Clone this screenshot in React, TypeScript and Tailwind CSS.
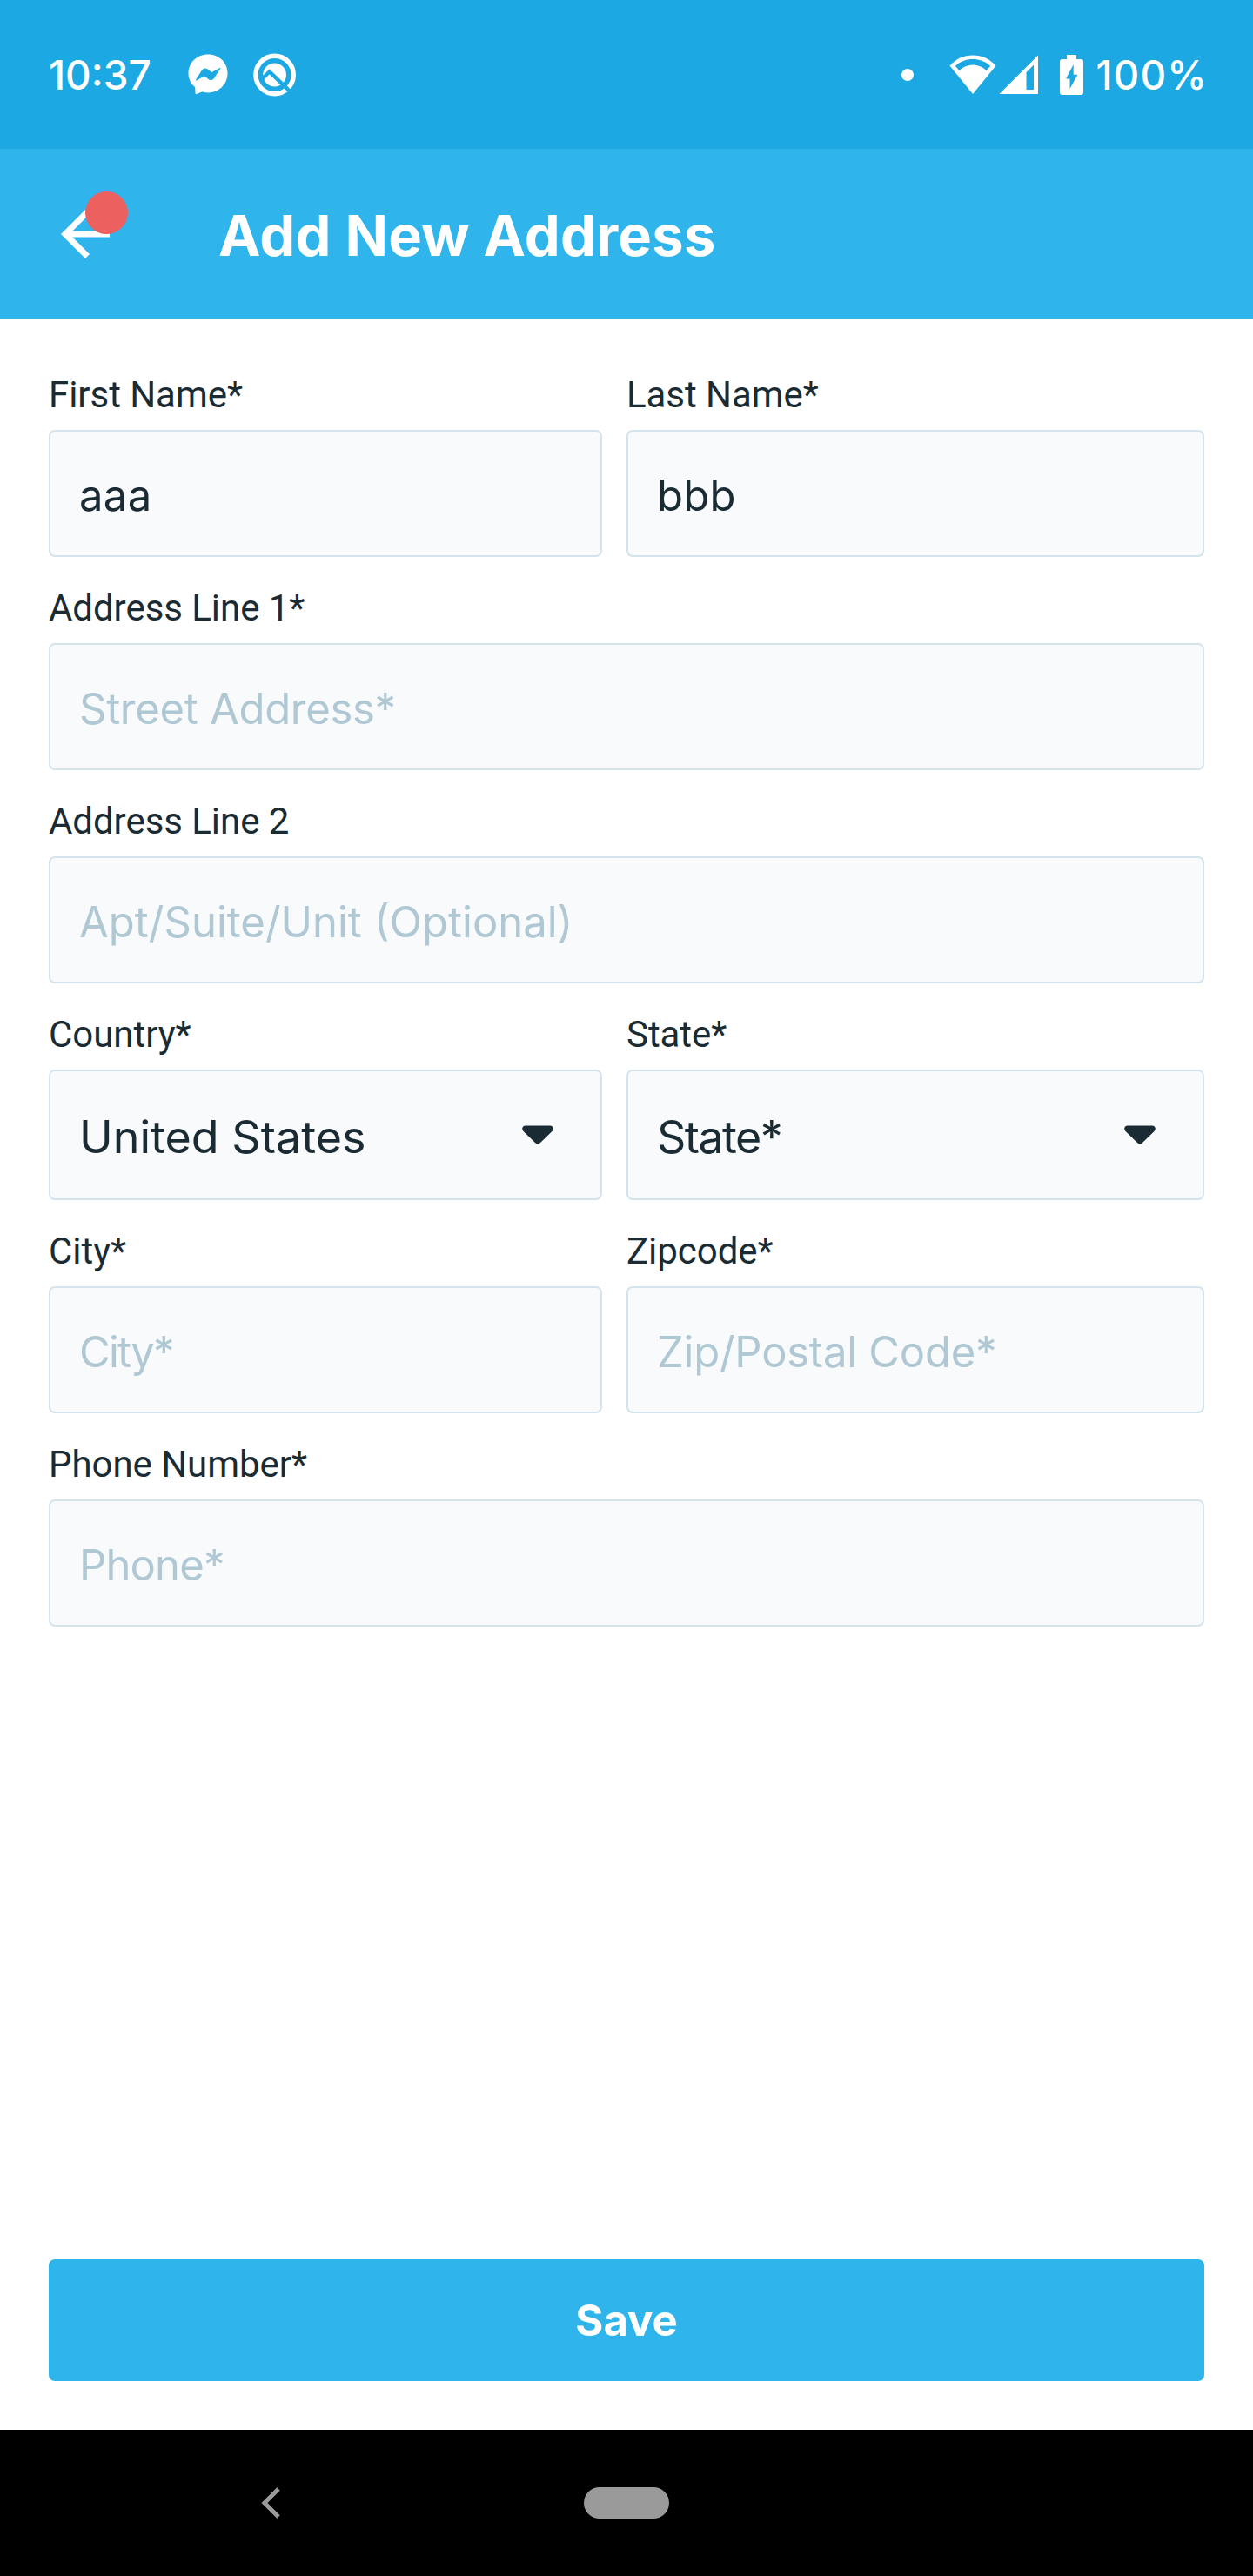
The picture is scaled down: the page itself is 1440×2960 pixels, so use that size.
import type { ReactNode } from 'react';

function MessengerIcon() {
  return (
    <svg width="46" height="47" viewBox="0 0 46 47" className="shrink-0">
      <path d="M23 .5C10.300 .5 .5 10 .5 22.300c0 6.200 2.600 11.500 7 15.300.5.5 .8 1 .8 1.700l.2 5.700c0 .8.8 1.300 1.600 1l5.300-2.300c.5-.2 1-.2 1.500-.1 1.900.6 4 .8 6.100.8 12.700 0 22.500-9.500 22.500-22.100S35.700.5 23 .5Z" fill="#fff" />
      <path d="m9.400 30 7.200-11.300c1.200-1.800 3.600-2.200 5.300-1l5.300 4 9.500-5.300-7.200 11.300c-1.200 1.800-3.600 2.200-5.300 1l-5.300-4L9.400 30Z" fill="#1ca9e3" stroke="#1ca9e3" strokeWidth="1.200" strokeLinejoin="round" />
    </svg>
  );
}

function QIcon() {
  return (
    <svg width="50" height="50" viewBox="0 0 50 50" className="shrink-0">
      <circle cx="24.600" cy="25" r="21.700" fill="none" stroke="#fff" strokeWidth="5.400" />
      <circle cx="24.600" cy="25" r="13.400" fill="#fff" />
      <path d="M10.500 29.500 18.700 21.300 46 47.500" fill="none" stroke="#1ca9e3" strokeWidth="4.400" />
    </svg>
  );
}

function WifiIcon() {
  return (
    <svg width="54" height="46" viewBox="0 0 54 46" className="shrink-0">
      <path d="M27 .5C16.500 .5 7.500 4.800 .5 12.500L27 45 53.500 12.500C46.500 4.800 37.500 .5 27 .5Z" fill="#fff" />
      <path d="M6.800 12.700C12.500 7.600 19.500 5 27 5s14.500 2.600 20.200 7.700l-4.500 5.400C38.300 13.800 33 11.500 27 11.500s-11.300 2.300-15.700 6.600Z" fill="#1ca9e3" />
    </svg>
  );
}

function SignalIcon() {
  return (
    <svg width="46" height="46" viewBox="0 0 46 46" className="shrink-0">
      <path d="M45 .5V45H.5Z" fill="#fff" />
      <path d="M31.500 20 40 11.500V40h-8.500Z" fill="#1ca9e3" />
    </svg>
  );
}

function BatteryIcon() {
  return (
    <svg width="27" height="46" viewBox="0 0 27 46" className="shrink-0">
      <path d="M8 0h11v5h5a3 3 0 0 1 3 3v35a3 3 0 0 1-3 3H3a3 3 0 0 1-3-3V8a3 3 0 0 1 3-3h5Z" fill="#fff" />
      <path d="M15.700 11v11.700h4.800L11.500 39V27.500H7Z" fill="#1ca9e3" />
    </svg>
  );
}

function Caret() {
  return (
    <svg width="36" height="22" viewBox="0 0 36 22" className="shrink-0">
      <path d="M4 0.500h28c3.500 0 5 3.700 2.700 6.200L21 20c-1.700 1.700-4.300 1.700-6 0L1.300 6.700C-1 4.200 .5 .5 4 .5Z" fill="#1a2b33" />
    </svg>
  );
}

function Field({ label, children, className = '' }: { label: string; children: ReactNode; className?: string }) {
  return (
    <label className={`flex min-w-0 flex-col gap-4 ${className}`}>
      <span className="h-[49px] font-['Roboto',sans-serif] text-[42px] leading-[49px] tracking-[-0.05px]">{label}</span>
      {children}
    </label>
  );
}

const box = 'w-full rounded-[7px] border-2 border-[#d5e3ec] bg-[#f9fafc] px-[33px]';

function TextInput({ value, placeholder, className = '' }: { value?: string; placeholder?: string; className?: string }) {
  return (
    <input
      defaultValue={value}
      placeholder={placeholder}
      className={`${box} h-[146px] pt-1 text-[49px] outline-none placeholder:text-[#afc8d3] placeholder:opacity-100 ${className}`}
    />
  );
}

function SelectBox({ value, className = '' }: { value: string; className?: string }) {
  return (
    <button type="button" className={`${box} flex h-[150px] items-center justify-between text-left text-[52px] ${className}`}>
      <span className="pt-[5px]">{value}</span>
      <Caret />
    </button>
  );
}

export default function App() {
  return (
    <div className="flex h-[2960px] w-[1440px] flex-col bg-white font-['Inter',sans-serif] text-[#1a2b33]">
      <div className="flex h-[171px] items-center justify-between bg-[#1ca9e3] pl-14 text-[46px] leading-none font-medium text-white">
        <div className="flex items-center">
          <span className="w-40">10:37</span>
          <MessengerIcon />
          <span className="w-[29px]" />
          <QIcon />
        </div>
        <div className="flex items-center pr-[52px]">
          <span className="mr-[41px] size-[14px] rounded-full bg-white" />
          <WifiIcon />
          <span className="w-[3px]" />
          <SignalIcon />
          <span className="w-6" />
          <BatteryIcon />
          <span className="ml-[14px] tracking-[1.100px]">100%</span>
        </div>
      </div>

      <header className="flex h-[196px] items-center bg-[#2fb5ec] pl-14 text-white">
        <button type="button" aria-label="Back" className="relative mr-[111px] size-[84px]">
          <svg width="84" height="84" viewBox="0 0 24 24" fill="currentColor">
            <path d="M20 11H7.830l5.590-5.590L12 4l-8 8 8 8 1.410-1.410L7.830 13H20v-2z" />
          </svg>
          <span className="absolute -top-[7px] left-[42px] size-[49px] rounded-full bg-[#ed6060]" />
        </button>
        <h1 className="pt-[3px] text-[65px] leading-none font-bold tracking-[0.250px]">Add New Address</h1>
      </header>

      <main className="flex flex-1 flex-col justify-between px-14 pt-[62px] pb-14">
        <form className="flex flex-col gap-[34px]">
          <div className="flex gap-7">
            <Field label="First Name*" className="w-[636px]">
              <TextInput value="aaa" className="tracking-[0.300px]" />
            </Field>
            <Field label="Last Name*" className="flex-1">
              <TextInput value="bbb" className="tracking-[0.200px]" />
            </Field>
          </div>
          <Field label="Address Line 1*">
            <TextInput placeholder="Street Address*" className="tracking-[-0.300px]" />
          </Field>
          <Field label="Address Line 2">
            <TextInput placeholder="Apt/Suite/Unit (Optional)" />
          </Field>
          <div className="flex gap-7">
            <Field label="Country*" className="w-[636px]">
              <SelectBox value="United States" className="pr-[54px]" />
            </Field>
            <Field label="State*" className="flex-1">
              <SelectBox value="State*" className="pr-[54px] tracking-[-1.600px]" />
            </Field>
          </div>
          <div className="flex gap-7">
            <Field label="City*" className="w-[636px]">
              <TextInput placeholder="City*" className="tracking-[-1.800px]" />
            </Field>
            <Field label="Zipcode*" className="flex-1">
              <TextInput placeholder="Zip/Postal Code*" className="tracking-[-0.250px]" />
            </Field>
          </div>
          <Field label="Phone Number*">
            <TextInput placeholder="Phone*" className="tracking-[-0.850px]" />
          </Field>
        </form>
        <button type="button" className="h-[140px] w-full rounded-[7px] bg-[#2fb5ec] pt-0.5 text-[49px] font-bold text-white">
          Save
        </button>
      </main>

      <nav className="grid h-[168px] grid-cols-[622px_196px_622px] items-center justify-items-center bg-black">
        <svg width="22" height="36" viewBox="0 0 22 36">
          <path d="M20 2 4 18l16 16" fill="none" stroke="#9a9a9a" strokeWidth="5" />
        </svg>
        <span className="h-9 w-[98px] rounded-full bg-[#9a9a9a]" />
      </nav>
    </div>
  );
}
